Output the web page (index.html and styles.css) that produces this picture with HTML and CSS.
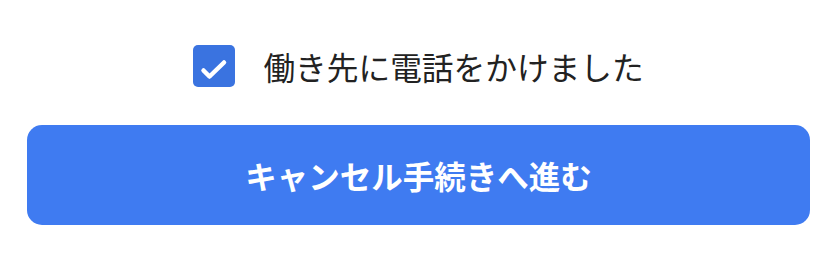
FILE: index.html
```html
<!DOCTYPE html>
<html lang="ja">
<head>
  <meta charset="UTF-8">
  <meta name="viewport" content="width=device-width, initial-scale=1.0">
  <title>キャンセル手続き</title>
  <link rel="stylesheet" href="styles.css">
</head>
<body>
  <div class="confirm">
    <label class="check-row">
      <span class="checkbox">
        <svg viewBox="0 0 42 42" width="42" height="42">
          <path d="M10.5 25.5l6 6L31 17.5" fill="none" stroke="#fff" stroke-width="4.5" stroke-linecap="round" stroke-linejoin="round"/>
        </svg>
      </span>
      <span class="check-label">働き先に電話をかけました</span>
    </label>
    <button type="button" class="next-btn">キャンセル手続きへ進む</button>
  </div>
</body>
</html>
```

FILE: styles.css
```css
* {
  margin: 0;
  padding: 0;
  box-sizing: border-box;
  font-family: 'Noto Sans CJK JP', 'Noto Sans', sans-serif;
}

body {
  background-color: #fff;
  width: 838px;
  height: 254px;
  overflow: hidden;
}

.confirm {
  display: flex;
  flex-direction: column;
  align-items: center;
  padding: 45px 28px 0 27px;
}

.check-row {
  display: flex;
  align-items: center;
  gap: 28px;
  height: 42px;
}

.checkbox {
  width: 42px;
  height: 42px;
  border-radius: 5px;
  background-color: #3a73e0;
  display: flex;
  align-items: center;
  justify-content: center;
}

.check-label {
  font-size: 31.7px;
  color: #222;
  line-height: 42px;
}

.next-btn {
  margin-top: 38px;
  width: 100%;
  height: 100px;
  border: none;
  border-radius: 15px;
  background-color: #3f7bf1;
  color: #fff;
  font-size: 31.5px;
  font-weight: 700;
  cursor: pointer;
}
```
